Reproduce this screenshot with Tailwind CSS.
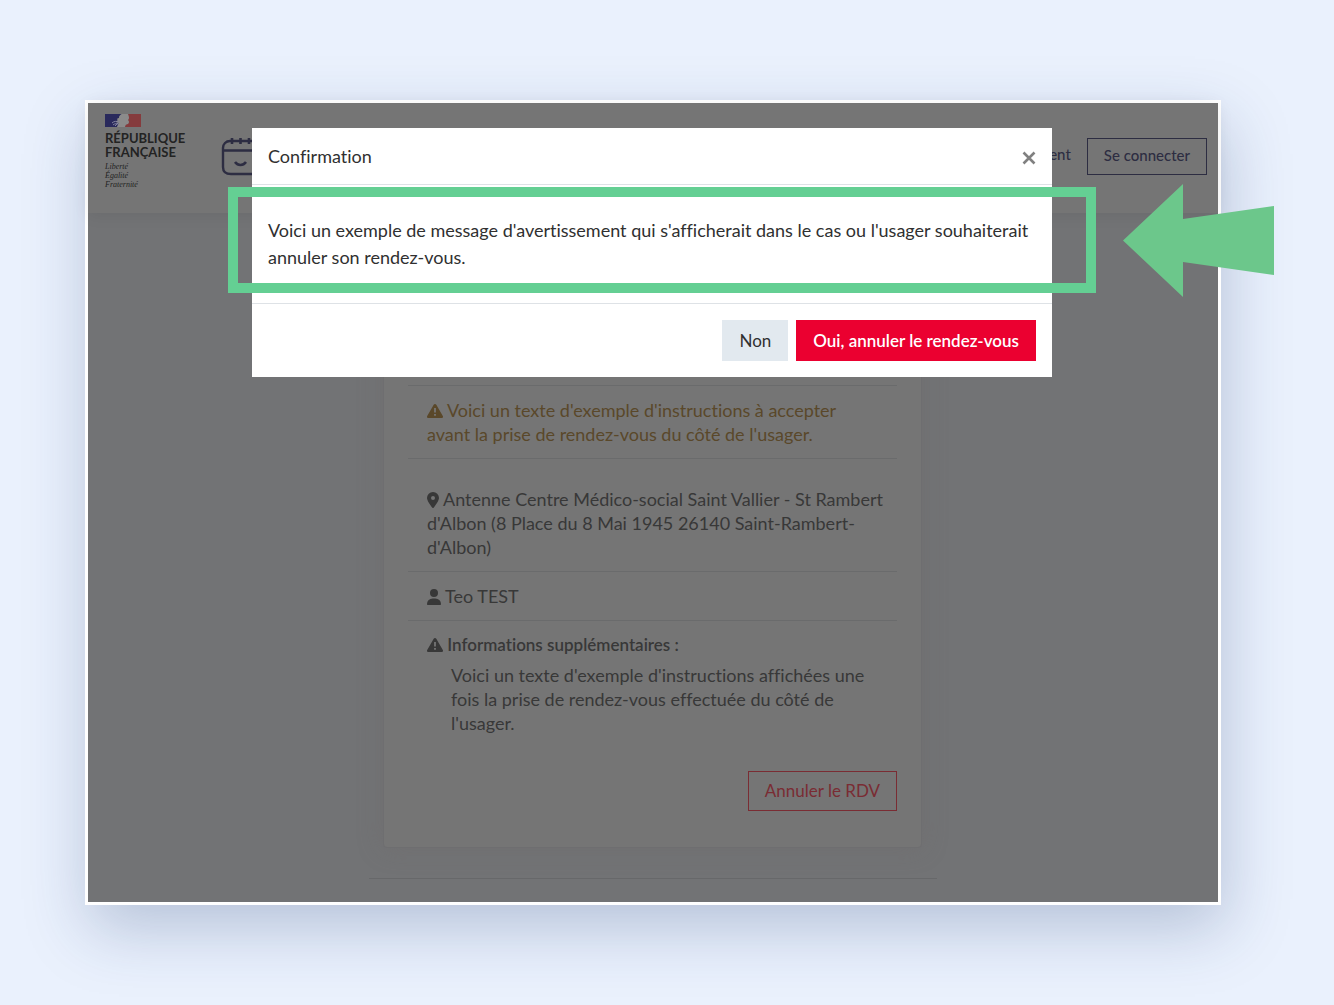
<!DOCTYPE html>
<html lang="fr">
<head>
<meta charset="utf-8">
<meta name="viewport" content="width=device-width, initial-scale=1">
<title>Confirmation</title>
<script src="https://cdn.jsdelivr.net/npm/@tailwindcss/browser@4"></script>
</head>
<body class="min-h-screen bg-[#eaf1fd] pt-[100px] pb-[100px] pl-[85px] pr-[113px] font-['Lato','Liberation_Sans',sans-serif] text-lg/6 text-[#383838] [font-variant-ligatures:none]">
<div class="relative border-3 border-white bg-[#727375] shadow-[4px_24px_60px_0_rgba(30,60,110,0.25)]">

  <!-- Page behind the dialog -->
  <header class="relative flex h-[110px] items-start justify-between bg-[#757575] pl-[17px] pr-[11px] shadow-[0_2px_16px_rgba(0,0,0,0.07)]">
    <div class="flex gap-9">
      <div class="pt-[11px] text-[#232323]">
        <svg class="block" width="36" height="13" viewBox="0 0 36 13" aria-hidden="true">
          <path fill="#29295c" d="M0 0h17c-2 1-3 2-3 4l-2 1 1 1-2 2 3 1-2 4H0z"/>
          <path fill="#853b3d" d="M23 0h13v13H20c0-2 1-3 3-3l1-2-1-2 1-2z"/>
          <path fill="#8b8b8b" d="M17 0h6l1 4-1 2 1 2-1 2c-2 0-3 1-3 3h-8l2-4-3-1 2-2-1-1 2-1c0-2 1-3 3-4z"/>
          <path fill="none" stroke="#8585a0" stroke-width="1" d="M7 9c2-2 5-2 7-1M8 11c2-2 4-1 6-1M10 12l3-3"/>
        </svg>
        <p class="pt-1 text-[13px]/[14px] font-bold">RÉPUBLIQUE<br>FRANÇAISE</p>
        <p class="pt-[3px] font-['Liberation_Serif',serif] text-[8px]/[9px] italic">Liberté<br>Égalité<br>Fraternité</p>
      </div>
      <svg class="mt-8 block" width="42" height="42" viewBox="0 0 42 42" fill="none" stroke="#2d2d42" stroke-width="2.4" stroke-linejoin="round" aria-hidden="true">
        <path d="M9 6h26c4 0 6 3 6 7v18c0 5-3 8-8 8H10c-5 0-8-2-8-7V13c0-4 3-7 7-7zM2 15.500h38"/>
        <path d="M11 3v6M19.500 3v6M28 3v6M36 3v6M14 27c3 4 8 4 11 0" stroke-width="2.600"/>
      </svg>
    </div>
    <nav class="flex items-center gap-4 pt-[35px] text-[15px]/[19px] font-medium text-[#2d2d42]">
      <a href="#" class="pb-1">ent</a>
      <a href="#" class="border border-[#2d2d42] px-4 pt-[7px] pb-[9px]">Se connecter</a>
    </nav>
  </header>

  <main class="mx-auto w-[568px] pt-[62px]">
    <section class="ml-[14px] mr-[15px] rounded border border-[#6e6e70] bg-[#757575] px-6 pb-9 pt-[109px] shadow-[0_0_24px_rgba(110,105,105,0.4)]">
      <div class="border-y border-[#6a6b6c] pl-[19px] py-3 text-[#5a482a]">
        <svg class="inline-block align-[-1px]" width="16" height="14" viewBox="0 0 16 14" aria-hidden="true"><path fill="currentColor" d="M8 0c.5 0 1 .3 1.300.8l6.500 11.100c.6 1-.1 2.100-1.200 2.100H1.400C.3 14-.4 12.900.2 11.900L6.700.8C7 .3 7.500 0 8 0z"/><path fill="#757575" d="M7.100 4h1.800v4.500H7.100zM7.100 10h1.800v1.800H7.100z"/></svg>
        Voici un texte d'exemple d'instructions à accepter<br>avant la prise de rendez-vous du côté de l'usager.
      </div>
      <div class="border-b border-[#6a6b6c] pl-[19px] pb-3 pt-7">
        <svg class="inline-block align-[-2px]" width="12" height="16" viewBox="0 0 12 16" aria-hidden="true"><path fill="currentColor" fill-rule="evenodd" d="M6 0a6 6 0 0 1 6 6c0 2.700-3.600 7.500-5.200 9.600a1 1 0 0 1-1.600 0C3.600 13.500 0 8.700 0 6a6 6 0 0 1 6-6zm0 4a2 2 0 1 0 0 4 2 2 0 0 0 0-4z"/></svg>
        Antenne Centre Médico-social Saint Vallier - St Rambert<br>d'Albon (8 Place du 8 Mai 1945 26140 Saint-Rambert-<br>d'Albon)
      </div>
      <div class="border-b border-[#6a6b6c] pl-[19px] py-3">
        <svg class="inline-block align-[-2px]" width="14" height="16" viewBox="0 0 14 16" aria-hidden="true"><path fill="currentColor" d="M7 0a4 4 0 1 1 0 8 4 4 0 0 1 0-8zM5.600 9.500h2.800A5.600 5.600 0 0 1 14 15c0 .6-.4 1-.9 1H.9c-.5 0-.9-.4-.9-1a5.600 5.600 0 0 1 5.600-5.500z"/></svg>
        Teo TEST
      </div>
      <div class="pl-[19px] pt-3">
        <h2 class="text-[17px]/6 font-semibold">
          <svg class="inline-block align-[-1px]" width="16" height="14" viewBox="0 0 16 14" aria-hidden="true"><path fill="currentColor" d="M8 0c.5 0 1 .3 1.300.8l6.500 11.100c.6 1-.1 2.100-1.200 2.100H1.400C.3 14-.4 12.900.2 11.900L6.700.8C7 .3 7.500 0 8 0z"/><path fill="#757575" d="M7.100 4h1.800v4.500H7.100zM7.100 10h1.800v1.800H7.100z"/></svg>
          Informations supplémentaires :
        </h2>
        <p class="pl-6 pt-[6px]">Voici un texte d'exemple d'instructions affichées une<br>fois la prise de rendez-vous effectuée du côté de<br>l'usager.</p>
      </div>
      <div class="flex justify-end pt-9">
        <button type="button" class="border border-[#7a2c33] px-4 py-[7px] text-[17px]/6 text-[#7a2c33]">Annuler le RDV</button>
      </div>
    </section>
    <hr class="mb-[23px] mt-[30px] border-[#67686a]">
  </main>

  <!-- Confirmation dialog -->
  <div role="dialog" aria-modal="true" aria-labelledby="dialog-title" class="absolute left-0 right-0.5 top-[25px] mx-auto w-[800px] bg-white text-[#303030]">
    <div class="flex items-center justify-between border-b border-[#dee2e6] px-4 py-4">
      <h1 id="dialog-title">Confirmation</h1>
      <button type="button" aria-label="Fermer" class="pt-1 text-[#808080]">
        <svg class="block" width="15" height="14" viewBox="0 0 15 14" aria-hidden="true"><path d="M2.500 1.500l11 11M13.500 1.500l-11 11" stroke="currentColor" stroke-width="2.600"/></svg>
      </button>
    </div>
    <div class="relative px-4 py-8 leading-[27px]">
      <p>Voici un exemple de message d'avertissement qui s'afficherait dans le cas ou l'usager souhaiterait annuler son rendez-vous.</p>
      <div class="absolute -left-6 -right-11 top-[2px] h-[106px] border-10 border-[#64cf93]"></div>
    </div>
    <div class="flex justify-end gap-2 border-t border-[#dee2e6] p-4">
      <button type="button" class="bg-[#e2e9ef] px-[17px] py-2 text-[17px]/[25px]">Non</button>
      <button type="button" class="bg-[#eb0030] px-[17px] py-2 text-[17px]/[25px] font-semibold text-white">Oui, annuler le rendez-vous</button>
    </div>
  </div>

  <!-- Pointer towards the highlighted message -->
  <svg class="absolute -right-14 top-[81px]" width="151" height="113" viewBox="0 0 151 113" aria-hidden="true"><path fill="#6cc78b" d="M0 56.500L60 0v35l91-13v69L60 78v35z"/></svg>
</div>
</body>
</html>
